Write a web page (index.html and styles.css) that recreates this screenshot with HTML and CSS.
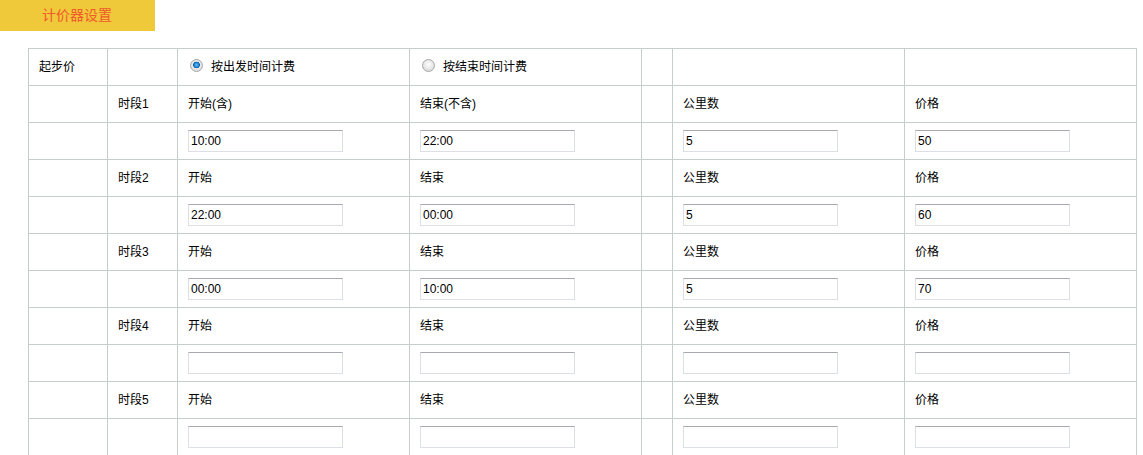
FILE: index.html
```html
<!DOCTYPE html>
<html lang="zh-CN">
<head>
<meta charset="utf-8">
<title>计价器设置</title>
<link rel="stylesheet" href="styles.css">
</head>
<body>
<div class="tab">计价器设置</div>
<table class="grid">
  <colgroup>
    <col class="c1"><col class="c2"><col class="c3"><col class="c4"><col class="c5"><col class="c6"><col class="c7">
  </colgroup>
  <tr class="lbl">
    <td>起步价</td><td></td>
    <td><label class="opt"><input type="radio" name="mode" checked><span>按出发时间计费</span></label></td>
    <td><label class="opt"><input type="radio" name="mode"><span>按结束时间计费</span></label></td>
    <td></td><td></td><td></td>
  </tr>
  <tr class="lbl"><td></td><td>时段1</td><td>开始(含)</td><td>结束(不含)</td><td></td><td>公里数</td><td>价格</td></tr>
  <tr><td></td><td></td><td><input class="field" value="10:00"></td><td><input class="field" value="22:00"></td><td></td><td><input class="field" value="5"></td><td><input class="field" value="50"></td></tr>
  <tr class="lbl"><td></td><td>时段2</td><td>开始</td><td>结束</td><td></td><td>公里数</td><td>价格</td></tr>
  <tr><td></td><td></td><td><input class="field" value="22:00"></td><td><input class="field" value="00:00"></td><td></td><td><input class="field" value="5"></td><td><input class="field" value="60"></td></tr>
  <tr class="lbl"><td></td><td>时段3</td><td>开始</td><td>结束</td><td></td><td>公里数</td><td>价格</td></tr>
  <tr><td></td><td></td><td><input class="field" value="00:00"></td><td><input class="field" value="10:00"></td><td></td><td><input class="field" value="5"></td><td><input class="field" value="70"></td></tr>
  <tr class="lbl"><td></td><td>时段4</td><td>开始</td><td>结束</td><td></td><td>公里数</td><td>价格</td></tr>
  <tr><td></td><td></td><td><input class="field" value=""></td><td><input class="field" value=""></td><td></td><td><input class="field" value=""></td><td><input class="field" value=""></td></tr>
  <tr class="lbl"><td></td><td>时段5</td><td>开始</td><td>结束</td><td></td><td>公里数</td><td>价格</td></tr>
  <tr><td></td><td></td><td><input class="field" value=""></td><td><input class="field" value=""></td><td></td><td><input class="field" value=""></td><td><input class="field" value=""></td></tr>
</table>
</body>
</html>
```
FILE: styles.css
```css
html, body {
  margin: 0;
  padding: 0;
  background: #fff;
}
body {
  font-family: "Liberation Sans", "Noto Sans CJK SC", sans-serif;
  font-size: 12px;
  color: #000;
}
.tab {
  width: 155px;
  height: 31px;
  box-sizing: border-box;
  padding-left: 42px;
  line-height: 28px;
  background: #f0c93b;
  color: #f0592a;
  font-size: 14px;
  font-family: "Noto Sans CJK SC", sans-serif;
}
.grid {
  margin: 17px 0 0 28px;
  border-collapse: collapse;
  table-layout: fixed;
  width: 1109px;
}
.c1 { width: 79px; }
.c2 { width: 70px; }
.c3 { width: 232px; }
.c4 { width: 232px; }
.c5 { width: 31px; }
.c6 { width: 232px; }
.c7 { width: 232px; }
.grid td {
  border: 1px solid #c5cdcd;
  height: 36px;
  padding: 0 0 0 10px;
  box-sizing: border-box;
  vertical-align: middle;
  white-space: nowrap;
}
.grid tr { height: 37px; }
.grid .lbl td { padding-bottom: 4px; }
.opt {
  display: flex;
  align-items: center;
  gap: 8px;
  padding-left: 2px;
}
.opt input {
  appearance: none;
  -webkit-appearance: none;
  margin: 0;
  width: 13px;
  height: 13px;
  border-radius: 50%;
  border: 1px solid #a9a9a9;
  box-sizing: border-box;
  background: radial-gradient(circle at 50% 40%, #ffffff 0%, #e6e6e6 55%, #c9c9c9 100%);
}
.opt input:checked {
  background: radial-gradient(circle at 50% 45%, #6cc4f4 0%, #1a7fd0 28%, #0d5fa8 38%, #e9e9e9 44%, #d0d0d0 100%);
}
.field {
  width: 155px;
  height: 22px;
  box-sizing: border-box;
  margin: 0;
  padding: 0 0 0 2px;
  border: 1px solid #dcdfe6;
  border-top-color: #a8a8b0;
  font-family: "Liberation Sans", Arial, sans-serif;
  font-size: 12px;
  color: #000;
  background: #fff;
  display: block;
  outline: none;
}
```
